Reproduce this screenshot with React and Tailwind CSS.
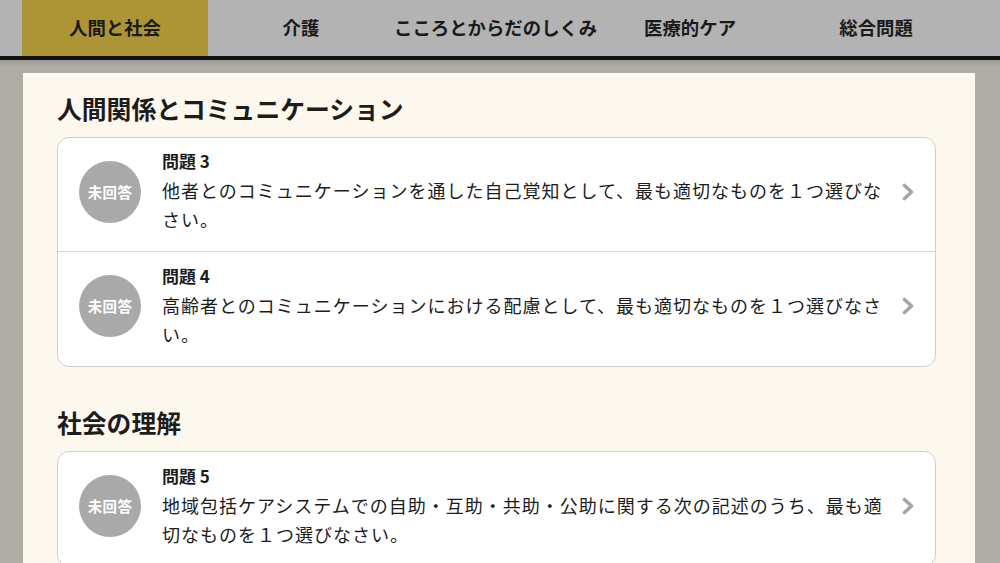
import React from "react";

const tabs = [
  { label: "人間と社会", active: true },
  { label: "介護" },
  { label: "こころとからだのしくみ" },
  { label: "医療的ケア" },
  { label: "総合問題" },
];

const sections = [
  {
    title: "人間関係とコミュニケーション",
    items: [
      { no: 3, text: "他者とのコミュニケーションを通した自己覚知として、最も適切なものを１つ選びなさい。" },
      { no: 4, text: "高齢者とのコミュニケーションにおける配慮として、最も適切なものを１つ選びなさい。" },
    ],
  },
  {
    title: "社会の理解",
    items: [
      { no: 5, text: "地域包括ケアシステムでの自助・互助・共助・公助に関する次の記述のうち、最も適切なものを１つ選びなさい。" },
    ],
  },
];

function Chevron() {
  return (
    <svg width="12" height="18" viewBox="0 0 12 18" className="shrink-0">
      <polyline points="2.5,2.5 9.5,9 2.5,15.5" fill="none" stroke="#a6a6a6" strokeWidth="3.6" strokeLinecap="round" strokeLinejoin="round" />
    </svg>
  );
}

function Row({ item, last }) {
  return (
    <div className={`flex items-center h-[114px] pl-[21px] pr-[21px] pb-[6px] ${last ? "" : "border-b border-[#d6d6d6]"}`}>
      <div className="w-[62px] h-[62px] rounded-full bg-[#a9a9a9] flex items-center justify-center shrink-0">
        <span className="text-white font-bold text-[14.5px] tracking-[0.3px]">未回答</span>
      </div>
      <div className="ml-[21px] w-[730px] shrink-0">
        <div className="font-bold text-[17px] leading-[24px] mb-[3px] text-[#1c1c1c]">問題 {item.no}</div>
        <div className="text-[18px] leading-[29px] tracking-[1px] text-[#1c1c1c]">{item.text}</div>
      </div>
      <div className="ml-[10px] flex items-center">
        <Chevron />
      </div>
    </div>
  );
}

export default function App() {
  return (
    <div
      className="w-[1000px] h-[563px] overflow-hidden bg-[#b0ada6]"
      style={{ fontFamily: '"Noto Sans CJK JP", "Noto Sans", sans-serif' }}
    >
      <div className="h-[56px] bg-[#b3b3b3] flex pl-[22px]">
        {tabs.map((t) => (
          <div
            key={t.label}
            className={`min-w-[186px] h-full flex items-center justify-center whitespace-nowrap font-bold text-[18.4px] text-[#1a1a1a] ${t.active ? "bg-[#ad9535]" : ""}`}
          >
            {t.label}
          </div>
        ))}
      </div>
      <div className="h-[4px] bg-[#111111]" />
      <div className="h-[7px] bg-gradient-to-b from-[#9c9a94] to-[#b0ada6]" />
      <div className="flex pt-[6px] pl-[23px]">
        <div className="w-[952px] bg-[#fcf8ee] pl-[34px] pr-[39px] pt-[17px] pb-[40px]">
          {sections.map((s, si) => (
            <div key={s.title} className={si > 0 ? "mt-[37px]" : ""}>
              <h2 className="font-bold text-[24.8px] leading-[36px] text-[#1c1c1c] mb-[11px]">{s.title}</h2>
              <div className="bg-white border border-[#cfcfcf] rounded-[12px] overflow-hidden">
                {s.items.map((it, i) => (
                  <Row key={it.no} item={it} last={i === s.items.length - 1} />
                ))}
              </div>
            </div>
          ))}
        </div>
      </div>
    </div>
  );
}
